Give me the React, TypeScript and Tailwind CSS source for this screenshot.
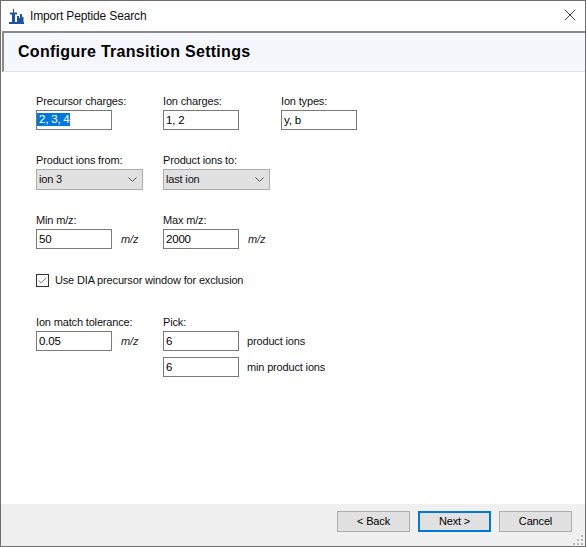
import { Check, X } from 'lucide-react';

const inputClass = 'w-[76px] h-5 border border-[#7a7a7a] bg-white px-[2px] text-[11.5px] tracking-[-0.2px] leading-[18px] text-black';

function Field({ label, value, selected }: { label: string; value: string; selected?: boolean }) {
    return (
        <div className="flex flex-col w-[76px] shrink-0">
            <span className="h-[15px] leading-[15px] mb-[1px] whitespace-nowrap">{label}</span>
            <div className={inputClass}>
                {selected ? <span className="bg-[#0078d7] text-white inline-block h-[13px] leading-[13px] mt-[2px] -ml-[2px] pl-[2px] align-top">{value}</span> : value}
            </div>
        </div>
    );
}

function Dropdown({ label, value }: { label: string; value: string }) {
    return (
        <div className="flex flex-col">
            <span className="h-[15px] leading-[15px] mb-[1px] whitespace-nowrap">{label}</span>
            <div className="w-[107px] h-[21px] border border-[#adadad] bg-[#e1e1e1] pl-[2px] pr-[5px] flex items-center justify-between">
                <span>{value}</span>
                <svg width="9" height="5" viewBox="0 0 9 5" fill="none">
                    <path d="M0.5 0.5 4.5 4.5 8.5 0.5" stroke="#555" strokeWidth="1" />
                </svg>
            </div>
        </div>
    );
}

function Unit({ children }: { children: string }) {
    return <div className="h-5 flex items-center italic text-[11px] text-[#222]">{children}</div>;
}

function Button({ label, focused }: { label: string; focused?: boolean }) {
    return (
        <div
            className={
                focused
                    ? 'w-[73px] h-[21px] border-2 border-[#0078d7] bg-[#e1e1e1] flex items-center justify-center text-black'
                    : 'w-[73px] h-[21px] border border-[#adadad] bg-[#e1e1e1] flex items-center justify-center text-black'
            }
        >
            {label}
        </div>
    );
}

export default function App() {
    return (
        <div className="w-[586px] h-[547px] border border-[#6e6e6e] bg-white flex flex-col text-[11px] tracking-[-0.16px] text-[#111] font-['Liberation_Sans',sans-serif]">
            <div className="h-[30px] flex items-center shrink-0">
                <svg width="15" height="15" viewBox="0 0 15 15" className="ml-[8px] mt-[1px]">
                    <path d="M0 13h15v2H0z M4 0h1v3.5H4z M1 3.5h7v2H1z M3 5.5h3V13H3z M8 7h2v6H8z M11 5h2v8h-2z M13 8h1.5v5H13z M10 9h1v4h-1z" fill="#1c54a0" />
                </svg>
                <span className="ml-[6px] text-[12px] tracking-[-0.14px]">Import Peptide Search</span>
                <X size={20} strokeWidth={0.9} className="ml-auto mr-[5px] mt-[-2px] text-black" />
            </div>

            <div className="ml-[1px] h-[41px] shrink-0 bg-[#f6f7fc] border-t-2 border-l-2 border-t-[#8a8a8a] border-l-[#8a8a8a] border-b border-b-[#e0e0e0] flex items-center">
                <h1 className="ml-[14px] mt-[-1px] text-[16px] font-bold text-black tracking-[0.29px]">
                    Configure Transition Settings
                </h1>
            </div>

            <div className="flex-1 pl-[35px] pt-[22px] flex flex-col">
                <div className="flex">
                    <div className="w-[127px]"><Field label="Precursor charges:" value="2, 3, 4" selected /></div>
                    <div className="w-[118px]"><Field label="Ion charges:" value="1, 2" /></div>
                    <Field label="Ion types:" value="y, b" />
                </div>

                <div className="flex mt-[23px]">
                    <div className="w-[127px]"><Dropdown label="Product ions from:" value="ion 3" /></div>
                    <Dropdown label="Product ions to:" value="last ion" />
                </div>

                <div className="flex mt-[23px]">
                    <div className="w-[127px] flex items-end gap-[9px]">
                        <Field label="Min m/z:" value="50" />
                        <Unit>m/z</Unit>
                    </div>
                    <div className="flex items-end gap-[9px]">
                        <Field label="Max m/z:" value="2000" />
                        <Unit>m/z</Unit>
                    </div>
                </div>

                <div className="flex items-center mt-[25px] h-[13px]">
                    <div className="w-[13px] h-[13px] border border-[#333] flex items-center justify-center">
                        <Check size={11} strokeWidth={1.5} className="text-[#444]" />
                    </div>
                    <span className="ml-[6px]">Use DIA precursor window for exclusion</span>
                </div>

                <div className="flex mt-[28px]">
                    <div className="w-[127px] flex items-end gap-[9px] self-start">
                        <Field label="Ion match tolerance:" value="0.05" />
                        <Unit>m/z</Unit>
                    </div>
                    <div className="flex flex-col gap-[6px]">
                        <div className="flex items-end gap-[8px]">
                            <Field label="Pick:" value="6" />
                            <div className="h-5 flex items-center">product ions</div>
                        </div>
                        <div className="flex items-center gap-[8px]">
                            <div className={inputClass}>6</div>
                            <span>min product ions</span>
                        </div>
                    </div>
                </div>
            </div>

            <div className="relative h-[42px] shrink-0 bg-[#f0f0f0] flex items-start justify-end gap-2 pt-[7px] pr-[13px]">
                <Button label="< Back" />
                <Button label="Next >" focused />
                <Button label="Cancel" />
                <svg width="12" height="12" viewBox="0 0 12 12" className="absolute right-0 bottom-0" fill="#b8b8b8">
                    <path d="M8 1h2v2H8z M4 5h2v2H4z M8 5h2v2H8z M0 9h2v2H0z M4 9h2v2H4z M8 9h2v2H8z" />
                </svg>
            </div>
        </div>
    );
}
